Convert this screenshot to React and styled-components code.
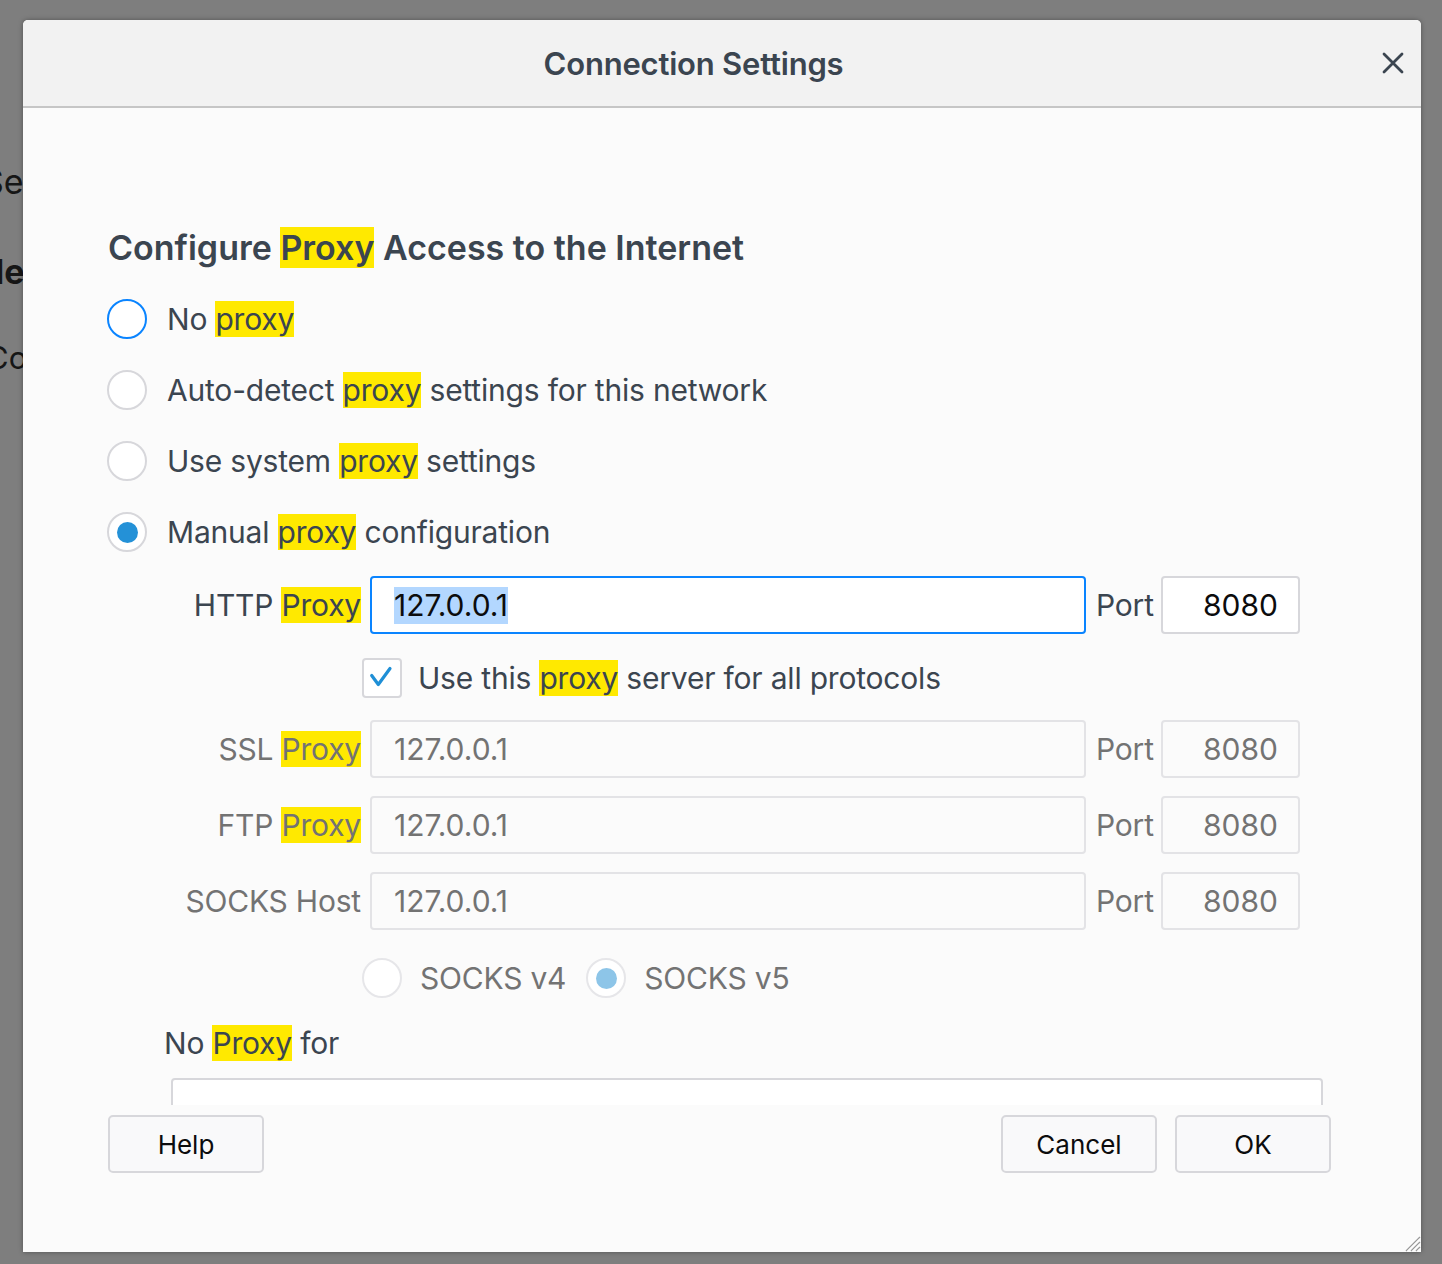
import React from "react";
import styled, { createGlobalStyle } from "styled-components";

const Global = createGlobalStyle`
  html, body { margin: 0; padding: 0; }
  body {
    background: #7e7e7e;
    font-family: Inter, "Noto Sans", "Liberation Sans", sans-serif;
  }
  * { box-sizing: border-box; }
`;

const Page = styled.div`
  position: relative;
  width: 1442px;
  height: 1264px;
  overflow: hidden;
  background: #7e7e7e;
`;

const Behind = styled.div`
  display: flex;
  flex-direction: column;
  padding-top: 160px;
  margin-left: -14px;
  color: #161616;
`;

const BehindText = styled.div`
  font-size: ${(p) => p.$size || 34}px;
  font-weight: ${(p) => (p.$bold ? 700 : 400)};
  line-height: 44px;
  margin-bottom: ${(p) => p.$mb || 0}px;
  margin-left: ${(p) => p.$ml || 0}px;
`;

const Dialog = styled.div`
  position: absolute;
  left: 23px;
  top: 20px;
  width: 1398px;
  height: 1232px;
  display: flex;
  flex-direction: column;
  background: #fbfbfb;
  border-radius: 5px 5px 0 0;
  box-shadow: 0 0 5px rgba(0, 0, 0, 0.35);
  overflow: hidden;
`;

const Header = styled.div`
  height: 88px;
  flex: none;
  display: flex;
  align-items: center;
  background: #f2f2f2;
  border-bottom: 2px solid #c6c6c6;
`;

const Title = styled.div`
  flex: 1;
  text-align: center;
  font-size: 31px;
  font-weight: 600;
  color: #3b4550;
  letter-spacing: -0.2px;
`;

const CloseBtn = styled.div`
  flex: none;
  width: 57px;
  height: 57px;
  display: flex;
  align-items: center;
  justify-content: center;
`;

const Body = styled.div`
  flex: none;
  height: 997px;
  overflow: hidden;
  padding: 120px 0 0 84px;
  color: #3b4550;
`;

const Heading = styled.div`
  font-size: 34px;
  font-weight: 600;
  line-height: 40px;
  height: 40px;
  margin-left: 1px;
`;

const Mark = styled.span`
  background: #ffe900;
`;

const Options = styled.div`
  display: flex;
  flex-direction: column;
  gap: 31px;
  margin-top: 31px;
`;

const OptionRow = styled.div`
  display: flex;
  align-items: center;
  height: 40px;
  gap: 20px;
  font-size: 30px;
  letter-spacing: -0.2px;
  color: #3b4550;
`;

const Radio = styled.div`
  width: 40px;
  height: 40px;
  flex: none;
  border-radius: 50%;
  background: #fff;
  border: 2px solid ${(p) => (p.$focus ? "#0a84ff" : p.$disabled ? "#e6e6e9" : "#d7d7db")};
  display: flex;
  align-items: center;
  justify-content: center;
  &::after {
    content: "";
    display: ${(p) => (p.$checked ? "block" : "none")};
    width: 21px;
    height: 21px;
    border-radius: 50%;
    background: ${(p) => (p.$disabled ? "#8dc5e8" : "#2491d7")};
  }
`;

const Manual = styled.div`
  padding-left: 57px;
  margin-top: 24px;
  display: flex;
  flex-direction: column;
`;

const FieldRow = styled.div`
  display: grid;
  grid-template-columns: 197px 716px 57px 139px;
  column-gap: 9px;
  align-items: center;
  margin-top: ${(p) => p.$mt || 0}px;
  font-size: 30px;
  letter-spacing: -0.2px;
  color: ${(p) => (p.$disabled ? "#737373" : "#3b4550")};
`;

const FieldLabel = styled.div`
  justify-self: end;
  white-space: nowrap;
  line-height: 40px;
`;

const PortLabel = styled.div`
  white-space: nowrap;
  line-height: 40px;
  padding-left: 1px;
`;

const TextBox = styled.div`
  height: 58px;
  border-radius: 4px;
  border: 2px solid ${(p) => (p.$focus ? "#0a84ff" : p.$disabled ? "#e3e3e6" : "#d7d7db")};
  background: ${(p) => (p.$disabled ? "#fbfbfb" : "#fff")};
  color: ${(p) => (p.$disabled ? "#737373" : "#0c0c0d")};
  display: flex;
  align-items: center;
  justify-content: ${(p) => (p.$right ? "flex-end" : "flex-start")};
  padding: 0 ${(p) => (p.$right ? 20 : 22)}px 0 22px;
  font-size: 30px;
  letter-spacing: 0;
  white-space: nowrap;
`;

const Selected = styled.span`
  background: #b3d7ff;
  line-height: 37px;
`;

const CheckArea = styled.div`
  grid-column: 2 / span 3;
  margin-left: -8px;
  display: flex;
  align-items: center;
  gap: 16px;
  height: 40px;
`;

const CheckBox = styled.div`
  width: 40px;
  height: 40px;
  flex: none;
  border: 2px solid #d7d7db;
  border-radius: 4px;
  background: #fff;
  display: flex;
  align-items: center;
  justify-content: center;
`;

const SocksArea = styled.div`
  grid-column: 2 / span 3;
  margin-left: -8px;
  display: flex;
  align-items: center;
  height: 40px;
`;

const SocksItem = styled.div`
  display: flex;
  align-items: center;
  gap: 18px;
  margin-right: 20px;
`;

const NoProxyLabel = styled.div`
  margin-top: 25px;
  font-size: 30px;
  letter-spacing: -0.2px;
  line-height: 40px;
  color: #3b4550;
`;

const TextArea = styled.div`
  margin-top: 15px;
  margin-left: 7px;
  width: 1152px;
  height: 140px;
  border: 2px solid #d7d7db;
  border-radius: 4px;
  background: #fff;
`;

const Footer = styled.div`
  flex: 1;
  display: flex;
  align-items: flex-start;
  padding: 10px 90px 0 85px;
  gap: 18px;
`;

const Spacer = styled.div`
  flex: 1;
`;

const Button = styled.div`
  width: 156px;
  height: 58px;
  border: 2px solid #d7d7db;
  border-radius: 5px;
  background: #f9f9fa;
  color: #0c0c0d;
  font-size: 26px;
  display: flex;
  align-items: center;
  justify-content: center;
`;

const Grip = styled.svg`
  position: absolute;
  right: 0;
  bottom: 0;
`;

const P = ({ children }) => <Mark>{children}</Mark>;

export default function App() {
  return (
    <Page>
      <Global />
      <Behind>
        <BehindText $mb={46} $ml={-4}>Se</BehindText>
        <BehindText $bold $mb={42} $ml={9}>le</BehindText>
        <BehindText $size={31}>Co</BehindText>
      </Behind>
      <Dialog>
        <Header>
          <Title>Connection Settings</Title>
          <CloseBtn>
            <svg width="22" height="22" viewBox="0 0 22 22">
              <path d="M2 2 L20 20 M20 2 L2 20" stroke="#3b4550" strokeWidth="2.8" strokeLinecap="round" />
            </svg>
          </CloseBtn>
        </Header>
        <Body>
          <Heading>
            Configure <P>Proxy</P> Access to the Internet
          </Heading>
          <Options>
            <OptionRow>
              <Radio $focus />
              <span>
                No <P>proxy</P>
              </span>
            </OptionRow>
            <OptionRow>
              <Radio />
              <span>
                Auto-detect <P>proxy</P> settings for this network
              </span>
            </OptionRow>
            <OptionRow>
              <Radio />
              <span>
                Use system <P>proxy</P> settings
              </span>
            </OptionRow>
            <OptionRow>
              <Radio $checked />
              <span>
                Manual <P>proxy</P> configuration
              </span>
            </OptionRow>
          </Options>
          <Manual>
            <FieldRow>
              <FieldLabel>
                HTTP <P>Proxy</P>
              </FieldLabel>
              <TextBox $focus>
                <Selected>127.0.0.1</Selected>
              </TextBox>
              <PortLabel>Port</PortLabel>
              <TextBox $right>8080</TextBox>
            </FieldRow>
            <FieldRow $mt={24}>
              <CheckArea>
                <CheckBox>
                  <svg width="40" height="40" viewBox="0 0 40 40" style={{ margin: -2 }}>
                    <path d="M9.7 17.5 L16.3 26.5 L28 10.5" fill="none" stroke="#1f8fd6" strokeWidth="3.2" strokeLinecap="round" strokeLinejoin="round" />
                  </svg>
                </CheckBox>
                <span>
                  Use this <P>proxy</P> server for all protocols
                </span>
              </CheckArea>
            </FieldRow>
            <FieldRow $mt={22} $disabled>
              <FieldLabel>
                SSL <P>Proxy</P>
              </FieldLabel>
              <TextBox $disabled>127.0.0.1</TextBox>
              <PortLabel>Port</PortLabel>
              <TextBox $disabled $right>8080</TextBox>
            </FieldRow>
            <FieldRow $mt={18} $disabled>
              <FieldLabel>
                FTP <P>Proxy</P>
              </FieldLabel>
              <TextBox $disabled>127.0.0.1</TextBox>
              <PortLabel>Port</PortLabel>
              <TextBox $disabled $right>8080</TextBox>
            </FieldRow>
            <FieldRow $mt={18} $disabled>
              <FieldLabel>SOCKS Host</FieldLabel>
              <TextBox $disabled>127.0.0.1</TextBox>
              <PortLabel>Port</PortLabel>
              <TextBox $disabled $right>8080</TextBox>
            </FieldRow>
            <FieldRow $mt={28} $disabled>
              <SocksArea>
                <SocksItem>
                  <Radio $disabled />
                  <span>SOCKS v4</span>
                </SocksItem>
                <SocksItem>
                  <Radio $disabled $checked />
                  <span>SOCKS v5</span>
                </SocksItem>
              </SocksArea>
            </FieldRow>
            <NoProxyLabel>
              No <P>Proxy</P> for
            </NoProxyLabel>
            <TextArea />
          </Manual>
        </Body>
        <Footer>
          <Button>Help</Button>
          <Spacer />
          <Button>Cancel</Button>
          <Button>OK</Button>
        </Footer>
        <Grip width="18" height="18" viewBox="0 0 18 18">
          <path d="M17 3 L3 17 M17 8 L8 17 M17 13 L13 17" stroke="#9a9a9a" strokeWidth="1.4" />
          <path d="M17 4.5 L4.5 17 M17 9.5 L9.5 17 M17 14.5 L14.5 17" stroke="#ffffff" strokeWidth="1" />
        </Grip>
      </Dialog>
    </Page>
  );
}
